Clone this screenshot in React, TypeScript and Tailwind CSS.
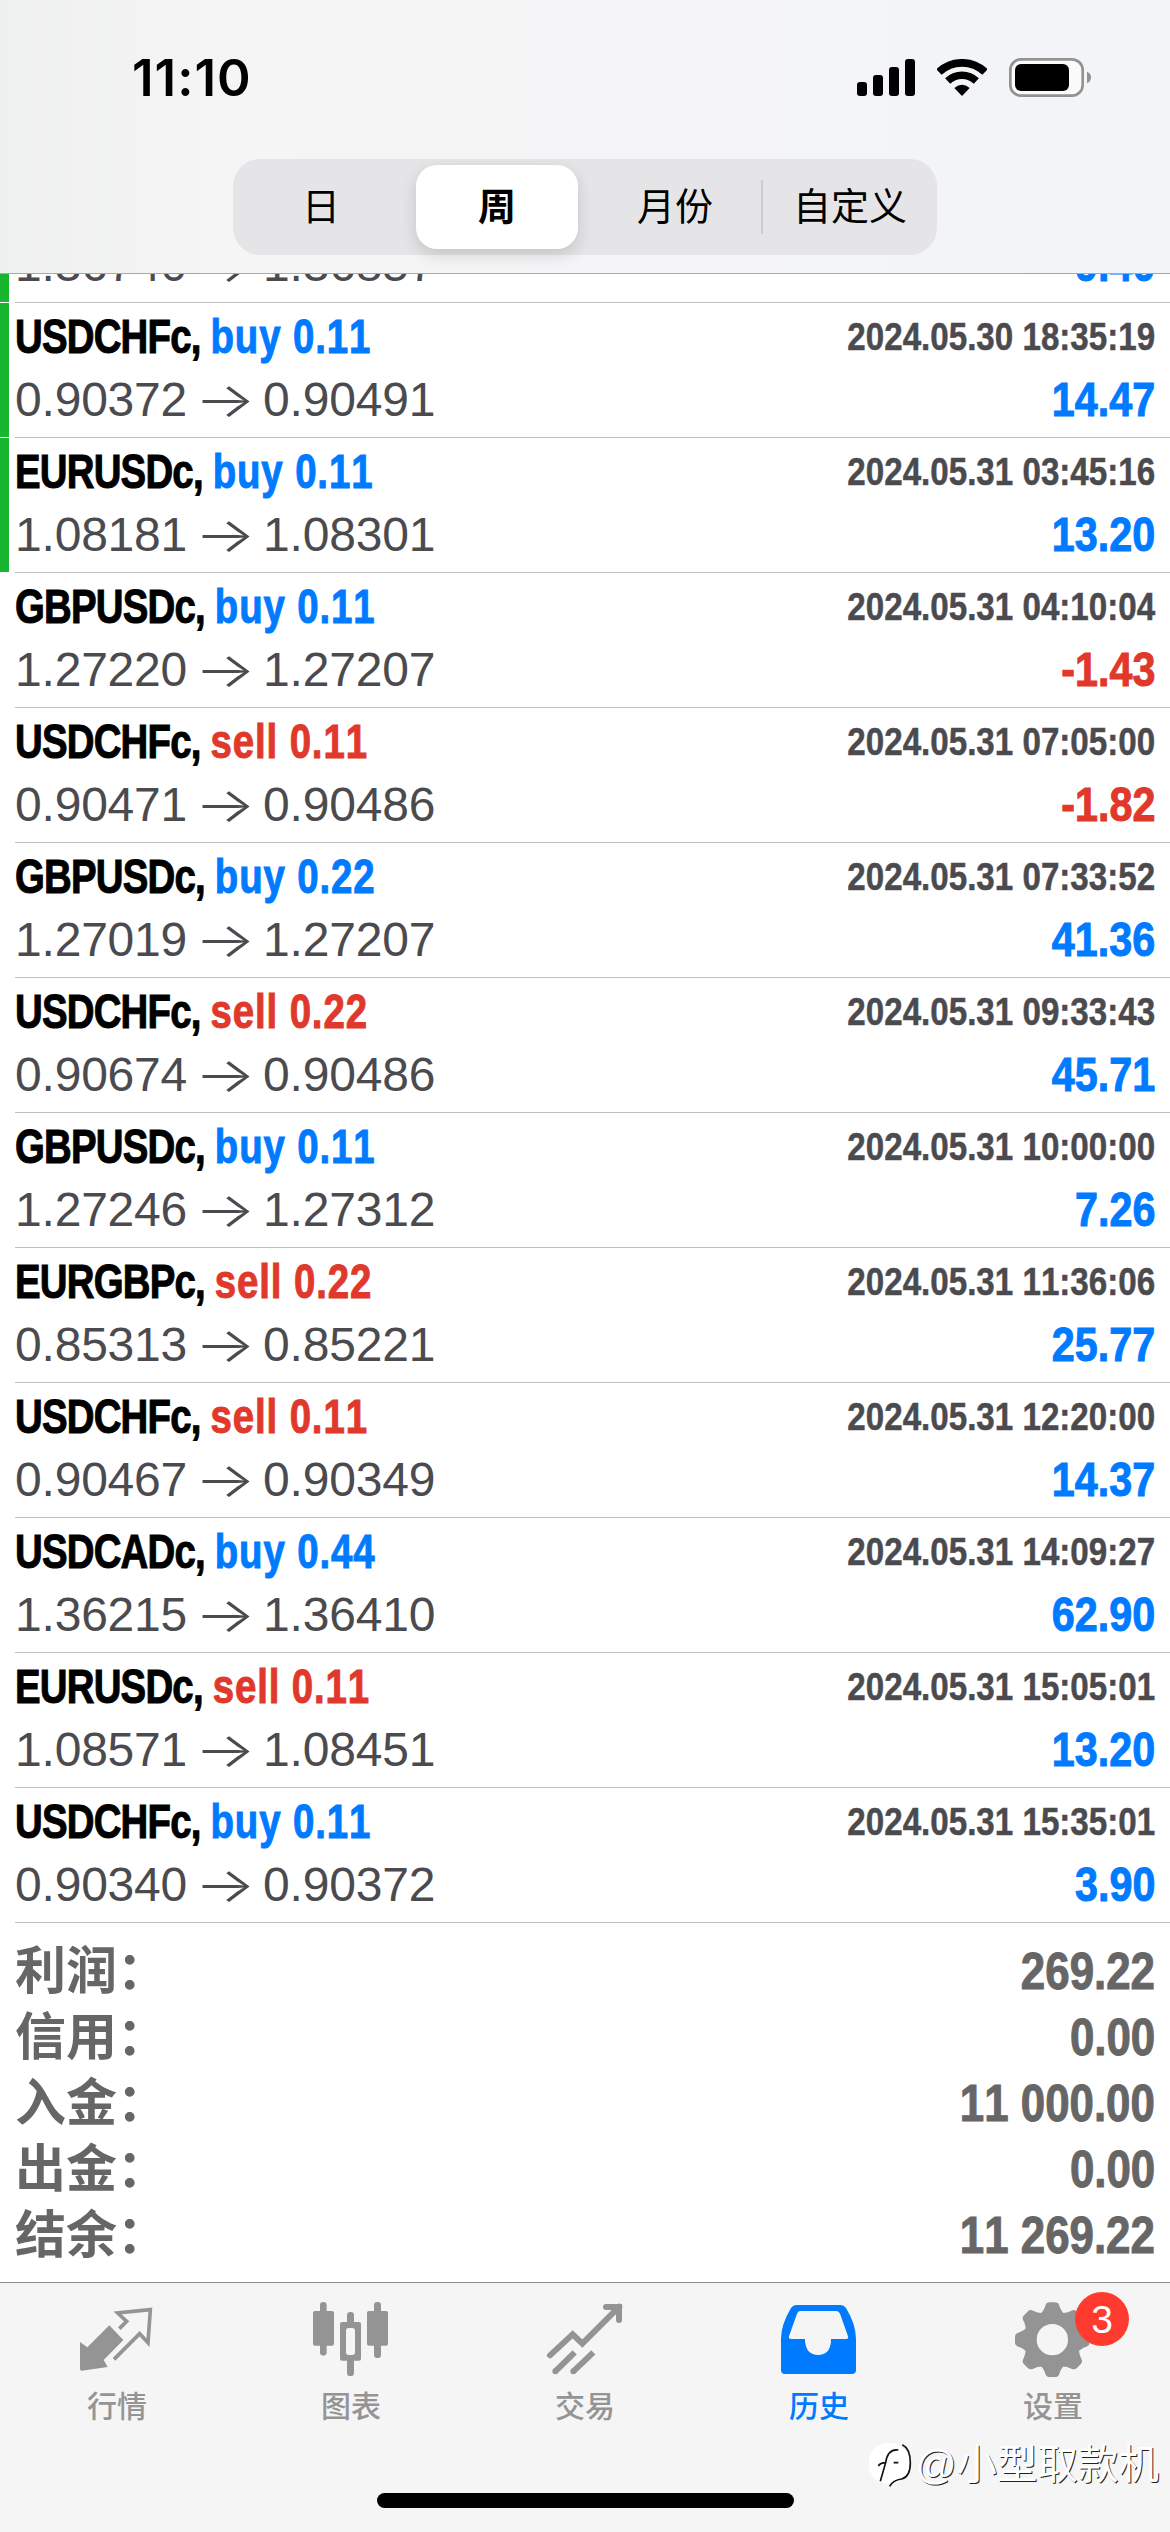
import type { ReactNode } from 'react';
import clsx from 'clsx';

interface Deal {
  symbol: string;
  side: 'buy' | 'sell';
  volume: string;
  open: string;
  close: string;
  time: string;
  profit: string;
  marked?: boolean;
}

const DEALS: Deal[] = [
  { symbol: 'USDCADc', side: 'buy', volume: '0.11', open: '1.36740', close: '1.36857', time: '2024.05.30 17:20:08', profit: '9.40', marked: true },
  { symbol: 'USDCHFc', side: 'buy', volume: '0.11', open: '0.90372', close: '0.90491', time: '2024.05.30 18:35:19', profit: '14.47', marked: true },
  { symbol: 'EURUSDc', side: 'buy', volume: '0.11', open: '1.08181', close: '1.08301', time: '2024.05.31 03:45:16', profit: '13.20', marked: true },
  { symbol: 'GBPUSDc', side: 'buy', volume: '0.11', open: '1.27220', close: '1.27207', time: '2024.05.31 04:10:04', profit: '-1.43' },
  { symbol: 'USDCHFc', side: 'sell', volume: '0.11', open: '0.90471', close: '0.90486', time: '2024.05.31 07:05:00', profit: '-1.82' },
  { symbol: 'GBPUSDc', side: 'buy', volume: '0.22', open: '1.27019', close: '1.27207', time: '2024.05.31 07:33:52', profit: '41.36' },
  { symbol: 'USDCHFc', side: 'sell', volume: '0.22', open: '0.90674', close: '0.90486', time: '2024.05.31 09:33:43', profit: '45.71' },
  { symbol: 'GBPUSDc', side: 'buy', volume: '0.11', open: '1.27246', close: '1.27312', time: '2024.05.31 10:00:00', profit: '7.26' },
  { symbol: 'EURGBPc', side: 'sell', volume: '0.22', open: '0.85313', close: '0.85221', time: '2024.05.31 11:36:06', profit: '25.77' },
  { symbol: 'USDCHFc', side: 'sell', volume: '0.11', open: '0.90467', close: '0.90349', time: '2024.05.31 12:20:00', profit: '14.37' },
  { symbol: 'USDCADc', side: 'buy', volume: '0.44', open: '1.36215', close: '1.36410', time: '2024.05.31 14:09:27', profit: '62.90' },
  { symbol: 'EURUSDc', side: 'sell', volume: '0.11', open: '1.08571', close: '1.08451', time: '2024.05.31 15:05:01', profit: '13.20' },
  { symbol: 'USDCHFc', side: 'buy', volume: '0.11', open: '0.90340', close: '0.90372', time: '2024.05.31 15:35:01', profit: '3.90' },
];

const SUMMARY = [
  { label: '利润', value: '269.22' },
  { label: '信用', value: '0.00' },
  { label: '入金', value: '11 000.00' },
  { label: '出金', value: '0.00' },
  { label: '结余', value: '11 269.22' },
];

const PERIODS = ['日', '周', '月份', '自定义'];

function StatusBar() {
  return (
    <div className="flex h-[159px] items-start justify-between pl-[132px] pr-[79px] pt-[58px]">
      <span className="font-['Inter',sans-serif] text-[51px] font-semibold leading-[40px] tracking-[1px]">11:10</span>
      <div className="flex items-center gap-[22px]">
        <svg width="58" height="37" viewBox="48 57 174 111">
          <rect x="48" y="126" width="30" height="42" rx="9" />
          <rect x="96" y="105" width="30" height="63" rx="9" />
          <rect x="144" y="81" width="30" height="87" rx="9" />
          <rect x="192" y="57" width="30" height="111" rx="9" />
        </svg>
        <svg width="50" height="37" viewBox="289 57 150 111" fill="none" stroke="#000">
          <path d="M295 96A100 100 0 0 1 433 96" strokeWidth="23" />
          <path d="M321 123A62 62 0 0 1 407 123" strokeWidth="22" />
          <path d="M364 168L341 144Q364 124 387 144Z" fill="#000" stroke="none" />
        </svg>
        <svg width="82" height="39" viewBox="507 54 246 117">
          <rect x="511" y="58" width="217" height="109" rx="32" fill="#fbfbfb" stroke="#929292" strokeWidth="8" />
          <rect x="525" y="72" width="162" height="81" rx="18" />
          <path d="M741 95Q753 100 753 112Q753 125 741 130Z" fill="#929292" />
        </svg>
      </div>
    </div>
  );
}

function PeriodSwitch() {
  return (
    <div className="mx-auto flex h-24 w-[704px] items-center rounded-[27px] bg-[#e5e5e7] text-[38px] leading-none">
      {PERIODS.map((p, i) => (
        <div
          key={p}
          className={clsx('flex w-[176px] items-center justify-center', i === 3 ? 'h-[54px] border-l-2 border-[#cdcdd0]' : 'h-[84px]', i === 2 && 'pl-1')}
        >
          {i === 1 ? (
            <span className="flex h-[84px] w-[162px] items-center justify-center rounded-[21px] bg-white font-bold shadow-[0_6px_16px_rgba(0,0,0,0.14)]">{p}</span>
          ) : (
            p
          )}
        </div>
      ))}
    </div>
  );
}

function DealRow({ deal }: { deal: Deal }) {
  return (
    <div className="flex h-[135px] shrink-0">
      <div className={clsx('mb-px w-[9px]', deal.marked && 'bg-[#17b530]')} />
      <div className="ml-1.5 flex-1 border-b border-[#bfbfc1] pr-[15px] pt-1 text-[48px]">
        <div className="flex justify-between leading-[60px]">
          <p className="origin-left scale-x-[0.8] whitespace-pre font-bold tracking-[-1px] [-webkit-text-stroke:1px]">
            {deal.symbol},{' '}
            <span className={clsx('tracking-[1.1px]', deal.side === 'buy' ? 'text-[#007aff]' : 'text-[#e0392c]')}>
              {deal.side} {deal.volume}
            </span>
          </p>
          <p className="origin-right scale-x-[0.85] text-[39px] font-bold text-[#4b4b4f] [-webkit-text-stroke:0.5px]">{deal.time}</p>
        </div>
        <div className="flex justify-between leading-[66px]">
          <p className="flex tracking-[-0.2px] text-[#4b4b4f]">
            {deal.open}
            <span className="w-[76px] scale-x-[1.34] text-center font-['Inter',sans-serif] font-light">→</span>
            {deal.close}
          </p>
          <p className={clsx('origin-right scale-x-[0.86] font-bold [-webkit-text-stroke:1px]', deal.profit.startsWith('-') ? 'text-[#e0392c]' : 'text-[#007aff]')}>
            {deal.profit}
          </p>
        </div>
      </div>
    </div>
  );
}

function QuotesIcon() {
  return (
    <>
      <path d="M9 132L31 148L97 82L139 126L80 186L92 207L14 218Q9 218 9 213Z" />
      <path d="M127 92L149 70L122 45L220 35L213 134L188 107L111 184" fill="none" stroke="currentColor" strokeWidth="11" />
    </>
  );
}

function ChartIcon() {
  return (
    <>
      <rect x="27" y="12" width="20" height="161" rx="10" />
      <rect x="6" y="39" width="63" height="104" rx="6" />
      <rect x="189" y="12" width="21" height="168" rx="10" />
      <rect x="168" y="39" width="63" height="104" rx="6" />
      <rect x="108" y="42" width="21" height="192" rx="10" />
      <rect x="87" y="72" width="63" height="116" rx="6" />
      <rect x="105" y="90" width="27" height="81" rx="8" fill="#f5f5f6" />
    </>
  );
}

function TradeIcon() {
  return (
    <g fill="none" stroke="currentColor" strokeWidth="18">
      <path d="M15 172L83 109L112 137L223 26" strokeLinecap="round" />
      <path d="M183 27H222V66" strokeLinecap="round" />
      <path d="M31 220L89 163M85 220L145 163" />
      <path d="M31 220h.1M85 220h.1" strokeLinecap="round" />
    </g>
  );
}

function HistoryIcon() {
  return (
    <path
      fillRule="evenodd"
      d="M52 21H185Q195 21 201 30Q231 80 231 122V216Q231 228 219 228H18Q6 228 6 216V122Q6 80 36 30Q42 21 52 21ZM63 39Q57 39 54 47L30 115Q28 123 36 123H78V130Q82 171 117 171Q153 171 156 130V123H202Q209 123 207 115L183 47Q180 39 172 39Z"
    />
  );
}

function SettingsIcon() {
  return (
    <g transform="translate(118 125)">
      {[0, 45, 90, 135, 180, 225, 270, 315].map(a => (
        <path key={a} d="M-38 -76Q-27 -84 -21 -102Q-18 -112 -8 -112H8Q18 -112 21 -102Q27 -84 38 -76Z" transform={`rotate(${a})`} />
      ))}
      <circle r="66" fill="none" stroke="currentColor" strokeWidth="38" />
    </g>
  );
}

const TABS: { label: string; icon: ReactNode; active?: boolean; badge?: string }[] = [
  { label: '行情', icon: <QuotesIcon /> },
  { label: '图表', icon: <ChartIcon /> },
  { label: '交易', icon: <TradeIcon /> },
  { label: '历史', icon: <HistoryIcon />, active: true },
  { label: '设置', icon: <SettingsIcon />, badge: '3' },
];

function TabBar() {
  return (
    <div className="flex h-[250px] flex-col justify-between border-t border-[#8c8c8e] bg-[#f5f5f6] pb-6 pt-[15px]">
      <div className="flex">
        {TABS.map(t => (
          <div key={t.label} className={clsx('relative flex flex-1 flex-col items-center', t.active ? 'text-[#007aff]' : 'text-[#949494]')}>
            <svg width="80" height="80" viewBox="0 0 240 240" fill="currentColor">{t.icon}</svg>
            <span className="mt-2 text-[30px] font-medium leading-[42px]">{t.label}</span>
            {t.badge && (
              <span className="absolute left-[139px] top-[-6px] flex h-[54px] w-[54px] items-center justify-center rounded-full bg-[#ff3b30] text-[39px] leading-none text-white">
                {t.badge}
              </span>
            )}
          </div>
        ))}
      </div>
      <div className="mx-auto h-[15px] w-[417px] rounded-full bg-black" />
    </div>
  );
}

function Watermark() {
  return (
    <div className="absolute bottom-[42px] right-[11px] flex items-center gap-0.5">
      <svg width="44" height="46" viewBox="0 0 132 138">
        <circle cx="60" cy="64" r="62" fill="#fff" />
        <path d="M100 8Q124 20 124 62Q124 104 98 111Q72 114 62 133" fill="none" stroke="#111" strokeWidth="5" />
        <path d="M88 24Q56 20 50 62L34 118M28 72Q34 62 50 62M74 62h14" fill="none" stroke="#111" strokeWidth="5" />
      </svg>
      <span className="text-[40.5px] leading-[50px] text-white [text-shadow:1px_1px_0.5px_#222]">@小型取款机</span>
    </div>
  );
}

export default function App() {
  return (
    <div className="relative flex h-[2532px] w-[1170px] flex-col overflow-hidden bg-white font-['Liberation_Sans','Noto_Sans_CJK_SC',sans-serif] text-black [font-kerning:none]">
      <header className="h-[274px] shrink-0 border-b border-[#a9a9ab] bg-gradient-to-r from-[#eff0f0] via-[#f5f5f5] via-20% to-[#f3f4f8]">
        <StatusBar />
        <PeriodSwitch />
      </header>

      <div className="flex h-[1649px] shrink-0 flex-col justify-end overflow-hidden">
        {DEALS.map(d => <DealRow key={d.time} deal={d} />)}
      </div>

      <div className="flex-1 px-[15px] pt-4 text-[51px] font-bold leading-[66px] text-[#666]">
        {SUMMARY.map(s => (
          <div key={s.label} className="flex h-[66px] justify-between">
            <span>{s.label}：</span>
            <span className="origin-right scale-x-[0.86] [-webkit-text-stroke:1px]">{s.value}</span>
          </div>
        ))}
      </div>

      <TabBar />
      <Watermark />
    </div>
  );
}
